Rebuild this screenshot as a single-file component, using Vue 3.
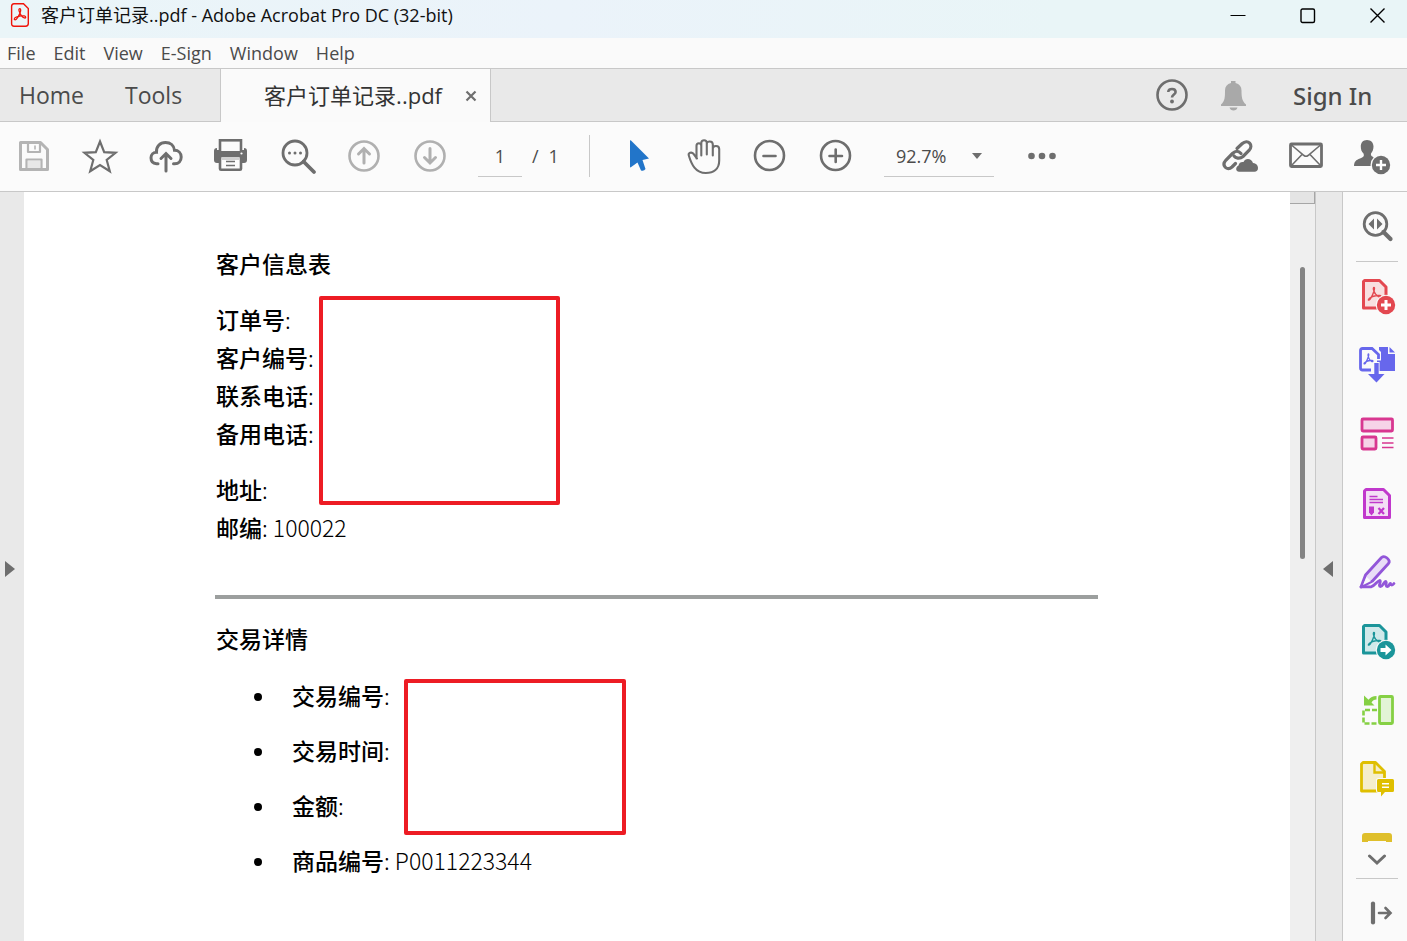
<script setup>
import { ref } from 'vue'

const menus = ['File', 'Edit', 'View', 'E-Sign', 'Window', 'Help']
const page = ref('1')
const zoom = ref('92.7%')
const customer = [
  [{ label: '订单号' }, { label: '客户编号' }, { label: '联系电话' }, { label: '备用电话' }],
  [{ label: '地址' }, { label: '邮编', value: '100022' }],
]
const trade = [
  { label: '交易编号' },
  { label: '交易时间' },
  { label: '金额' },
  { label: '商品编号', value: 'P0011223344' },
]
</script>

<template>
  <div class="window">
    <header class="titlebar">
      <svg class="app-icon" viewBox="0 0 20 26" fill="none" stroke="#f0140a">
        <path d="M4 1.8H13.500L18.300 6.500V21.500Q18.300 24.200 15.500 24.200H4Q1.600 24.200 1.600 21.500V4.500Q1.600 1.800 4 1.800Z" stroke-width="1.400" />
        <path d="M9.700 10.500C8.500 8 8.800 6.700 9.800 6.700C11 6.700 10.900 8.600 10 11C9 13.500 7.500 16.300 6.300 17.300C5 18.300 4 17.700 4.400 16.700C5 15.300 8 14.300 11 13.900C13.500 13.600 15.700 13.900 15.700 15.200C15.600 16.500 13.600 16.100 12.100 14.600C10.900 13.400 10.200 12 9.700 10.500Z" stroke-width="1.300" />
      </svg>
      <h1>客户订单记录..pdf - Adobe Acrobat Pro DC (32-bit)</h1>
      <div class="win-controls">
        <button aria-label="Minimize"><svg viewBox="0 0 16 16"><path d="M.5 7.500H15.500" stroke-width="1" /></svg></button>
        <button aria-label="Maximize"><svg viewBox="0 0 16 16"><rect x="1" y="1" width="13.500" height="13.500" rx="1.500" /></svg></button>
        <button aria-label="Close"><svg viewBox="0 0 16 16"><path d="M.5 .5L14.500 14.500M14.500 .5L.5 14.500" /></svg></button>
      </div>
    </header>

    <nav class="menubar">
      <button v-for="m in menus" :key="m">{{ m }}</button>
    </nav>

    <div class="tabs">
      <div class="main-tabs">
        <button>Home</button>
        <button>Tools</button>
      </div>
      <div class="doc-tab">
        <span>客户订单记录..pdf</span>
        <button aria-label="Close tab"><svg viewBox="0 0 12 12"><path d="M1.500 1.500L10.500 10.500M10.500 1.500L1.500 10.500" stroke="#6e6e6e" stroke-width="2.200" /></svg></button>
      </div>
      <div class="account">
        <button class="icon" aria-label="Help">
          <svg viewBox="0 0 40 40" fill="none" stroke="#6e6e6e">
            <circle cx="20" cy="20" r="14.500" stroke-width="2.600" />
            <path d="M16.300 17C16.300 14.800 18 14 20 14C22.200 14 23.600 15.200 23.600 17C23.600 19.600 20 19.600 20 22.600" stroke-width="2.600" />
            <circle cx="20" cy="26.500" r="1.900" fill="#6e6e6e" stroke="none" />
          </svg>
        </button>
        <button class="icon" aria-label="Notifications">
          <svg viewBox="0 0 40 40" fill="#a9a9a9">
            <path d="M18 6H22.500V8C26.500 9 28.500 11.500 28.500 15.500C28.500 22 29 26 33 29.500V31H8V29.500C12 26 12 22 12 15.500C12 11.500 14 9 18 8Z" />
            <path d="M16.500 32.500H24.500C24 34.500 22.500 35.500 20.500 35.500S17 34.500 16.500 32.500Z" />
          </svg>
        </button>
        <button class="sign-in">Sign In</button>
      </div>
    </div>

    <div class="toolbar">
      <div class="group">
        <button class="icon" aria-label="Save">
          <svg viewBox="0 0 40 40" fill="none" stroke="#b4b4b4" stroke-width="3" stroke-linejoin="round">
            <path d="M6.500 6.500H26.500L33.500 13.500V33.500H6.500Z" />
            <path d="M14 7V16H26V7M12.500 33V23.500H27.500V33" stroke-width="2.200" />
            <path d="M14 25H26V32H14Z" fill="#e8e8e8" stroke="none" />
            <path d="M21 9.500V13.500" stroke-width="1.600" />
          </svg>
        </button>
        <button class="icon" aria-label="Star">
          <svg viewBox="0 0 40 40" fill="none" stroke="#6e6e6e" stroke-width="2.200">
            <path d="M20 5.500L24.200 16.200L35.600 16.800L26.700 24L29.800 35.200L20 29L10.200 35.200L13.300 24L4.400 16.800L15.800 16.200Z" />
          </svg>
        </button>
        <button class="icon" aria-label="Upload to cloud">
          <svg viewBox="0 0 40 40" fill="none" stroke="#6e6e6e" stroke-width="3" stroke-linecap="round">
            <path d="M12 27.800H10.500C7 27.500 5 25 5 21.800C5 18.500 7.500 16.300 10.500 16.300C10 10.500 14 6.500 19.500 6.500C24.500 6.500 28 9.500 28.500 14.300C32.500 14.300 35.200 17.300 35.200 21C35.200 25 32.500 27.800 28.800 27.800H27.500" />
            <path d="M20 35V18M15 22.500L20 17.500L25 22.500" />
          </svg>
        </button>
        <button class="icon" aria-label="Print">
          <svg viewBox="0 0 40 40" fill="none" stroke="#6e6e6e" stroke-width="2.600">
            <path d="M2 15Q2 12 5 12V14H32V12Q35 12 35 15V24Q35 27 32 27H5Q2 27 2 24Z" fill="#6e6e6e" stroke="none" />
            <rect x="8" y="4.300" width="21" height="12" fill="#fbfbfb" />
            <path d="M6.700 15H30.300V21H6.700Z" fill="#6e6e6e" stroke="none" />
            <rect x="8" y="21" width="21" height="12.700" rx="1" fill="#fbfbfb" />
            <path d="M9.300 21H27.700V24H9.300Z" fill="#d0d0d0" stroke="none" />
            <path d="M14 25.500H23M14 29.500H23" stroke-width="1.400" />
            <circle cx="29.500" cy="17.500" r="1.100" fill="#fff" stroke="none" />
          </svg>
        </button>
        <button class="icon" aria-label="Find">
          <svg viewBox="0 0 40 40" fill="none" stroke="#6e6e6e">
            <circle cx="17" cy="17" r="12" stroke-width="2.800" />
            <path d="M25.500 25.500L36 36" stroke-width="3.800" stroke-linecap="round" />
            <g fill="#6e6e6e" stroke="none"><circle cx="11.500" cy="17" r="1.500" /><circle cx="17" cy="17" r="1.500" /><circle cx="22.500" cy="17" r="1.500" /></g>
          </svg>
        </button>
        <button class="icon" aria-label="Previous page">
          <svg viewBox="0 0 40 40" fill="none" stroke="#b0b0b0" stroke-width="3" stroke-linecap="round">
            <circle cx="20" cy="20" r="14.500" stroke-width="2.600" /><path d="M20 27V13M14.500 18L20 12.500L25.500 18" />
          </svg>
        </button>
        <button class="icon" aria-label="Next page">
          <svg viewBox="0 0 40 40" fill="none" stroke="#b0b0b0" stroke-width="3" stroke-linecap="round">
            <circle cx="20" cy="20" r="14.500" stroke-width="2.600" /><path d="M20 12.500V26.500M14.500 21.500L20 27L25.500 21.500" />
          </svg>
        </button>
      </div>
      <div class="pager">
        <input v-model="page" aria-label="Page number" />
        <span>/</span><span>1</span>
      </div>
      <div class="group divided">
        <button class="icon" aria-label="Select">
          <svg viewBox="0 0 40 40" fill="#2275c9"><path d="M12.500 4L31 22.500L24.500 24L27.500 33Q26 35.500 23 34.500L19.500 26.500L12.500 31.500Q12 31.500 12 30.500V5Z" /></svg>
        </button>
        <button class="icon" aria-label="Hand">
          <svg viewBox="0 0 40 40" fill="none" stroke="#6e6e6e" stroke-width="2.100" stroke-linecap="round" stroke-linejoin="round">
            <path d="M12.500 22.500V9.800C12.500 6.300 17.300 6.300 17.300 9.800V19.500M17.300 18V6.800C17.300 3.300 22.800 3.300 22.800 6.800V18.500M22.800 8C22.800 4.500 28.800 4.500 28.800 8.500V19.500M28.800 12.500C29 9 35.200 9 35.200 13V24.500C35.200 33 29.500 37 21.800 37C11.500 37 7.500 28.500 4.800 19.500C4 16.800 7.500 15.500 9.500 17.800L13 22.500" />
          </svg>
        </button>
        <button class="icon" aria-label="Zoom out">
          <svg viewBox="0 0 40 40" fill="none" stroke="#6e6e6e" stroke-linecap="round"><circle cx="19.500" cy="19.500" r="14.500" stroke-width="2.600" /><path d="M13.500 20H25.500" stroke-width="2.600" /></svg>
        </button>
        <button class="icon" aria-label="Zoom in">
          <svg viewBox="0 0 40 40" fill="none" stroke="#6e6e6e" stroke-linecap="round"><circle cx="19.500" cy="19.500" r="14.500" stroke-width="2.600" /><path d="M13.500 20H26M19.700 13.500V26" stroke-width="2.600" /></svg>
        </button>
      </div>
      <div class="zoom">
        <select v-model="zoom" aria-label="Zoom level"><option>92.7%</option></select>
        <svg viewBox="0 0 12 8"><path d="M1 1H11L6 7Z" fill="#6e6e6e" /></svg>
      </div>
      <button class="icon" aria-label="More tools">
        <svg viewBox="0 0 40 40" fill="#6e6e6e"><circle cx="9.500" cy="20" r="3.300" /><circle cx="20" cy="20" r="3.300" /><circle cx="30.500" cy="20" r="3.300" /></svg>
      </button>
      <div class="group share">
        <button class="icon" aria-label="Share link">
          <svg viewBox="0 0 40 40" fill="none" stroke="#6e6e6e" stroke-width="3.200" stroke-linecap="round">
            <path d="M17 12.500L22 7.800C28 2.500 34 9 29 14.500L23 20.500C19.500 23.500 15.500 22 14 20" />
            <path d="M21 17.500C18.500 14.500 15.500 14.500 12.500 17.500L6 24C1 29.500 7 35.500 12 31L15.500 27.500" />
            <path d="M19 35.800C15.800 35.800 15 31.500 18.500 29.500C19 26.500 21.500 25.500 23.500 26C25 22 31.500 22 33 27C37 27.500 38 30 38 32C38 34.500 36.500 35.800 34.500 35.800Z" fill="#6e6e6e" stroke="#fbfbfb" stroke-width="1.200" paint-order="stroke" />
          </svg>
        </button>
        <button class="icon" aria-label="Email">
          <svg viewBox="0 0 40 40" fill="none" stroke="#6e6e6e">
            <rect x="4.500" y="8" width="31" height="22.500" rx="1" stroke-width="2.800" />
            <path d="M5.500 9L18 19.500Q20 21 22 19.500L34.500 9M5.500 29.500L16 18.500M34.500 29.500L24 18.500" stroke-width="1.600" />
          </svg>
        </button>
        <button class="icon" aria-label="Add people">
          <svg viewBox="0 0 40 40" fill="#6e6e6e">
            <path d="M15 4C19 4 21.500 6.800 21.500 10.500C21.500 13.500 20.500 15.500 19 17.500C18.500 20 20 20.500 25 23V30H2C2 25.500 4 24 8 22.500C11.500 21 12.500 20.500 11.500 17.500C9.500 15.500 8.800 13.500 8.800 10.500C8.800 6.800 11 4 15 4Z" />
            <circle cx="29" cy="29" r="10.500" fill="#fbfbfb" /><circle cx="29" cy="29" r="9.200" />
            <path d="M24 29H34M29 24V34" stroke="#fff" stroke-width="2.400" />
          </svg>
        </button>
      </div>
    </div>

    <div class="workspace">
      <button class="edge left" aria-label="Open navigation pane"><svg viewBox="0 0 10 16"><path d="M0 0L10 8L0 16Z" fill="#6e6e6e" /></svg></button>

      <main class="page">
        <article>
          <section>
            <h2>客户信息表</h2>
            <div v-for="(block, i) in customer" :key="i" class="block">
              <p v-for="f in block" :key="f.label"><b>{{ f.label }}</b>: {{ f.value }}</p>
            </div>
            <div class="mask customer-mask"></div>
          </section>
          <hr />
          <section>
            <h2>交易详情</h2>
            <ul>
              <li v-for="f in trade" :key="f.label"><b>{{ f.label }}</b>: {{ f.value }}</li>
            </ul>
            <div class="mask trade-mask"></div>
          </section>
        </article>
      </main>

      <div class="scrollbar"><div class="split"></div><div class="thumb"></div></div>
      <button class="edge right" aria-label="Close tools pane"><svg viewBox="0 0 10 16"><path d="M10 0L0 8L10 16Z" fill="#6e6e6e" /></svg></button>

      <aside class="tools">
        <div class="tools-head">
          <button class="icon" aria-label="Search tools">
            <svg viewBox="0 0 40 40" fill="none" stroke="#6e6e6e">
              <circle cx="18.500" cy="18" r="11.300" stroke-width="2.800" /><path d="M26.500 26L33.500 33" stroke-width="4.200" stroke-linecap="round" />
              <path d="M17 12.500V23.500L11.500 18ZM20 12.500V23.500L25.500 18Z" fill="#6e6e6e" stroke="none" />
            </svg>
          </button>
        </div>
        <div class="tool-list">
          <button class="icon" aria-label="Create PDF">
            <svg viewBox="0 0 40 40" fill="none" stroke="#e34850">
              <path d="M7.500 4.500H22.500L29 11V32H6.500V5.500Z" fill="#f8dfe0" stroke-width="3" stroke-linejoin="round" />
              <path d="M17 11.500C15.500 11.500 17 16 18.500 18C20 20.500 24 22.500 24 20.500C24 18.500 17 19.500 13.500 21.500C10 24 11.500 25.500 13.500 22.500C16 19 18.500 11.500 17 11.500Z" stroke-width="1.400" />
              <circle cx="29" cy="29" r="10.300" fill="#fafafa" stroke="none" /><circle cx="29" cy="29" r="9.200" fill="#e34850" stroke="none" />
              <path d="M24 29H34M29 24V34" stroke="#fff" stroke-width="3" />
            </svg>
          </button>
          <button class="icon" aria-label="Export PDF">
            <svg viewBox="0 0 40 40" fill="none" stroke="#6767ec">
              <path d="M14 25H5.500Q3.500 25 3.500 23V5.500Q3.500 3.500 5.500 3.500H15L21.500 9.500V14" stroke-width="2.800" />
              <path d="M11.500 9C10.500 9 11.300 12.500 12.300 14C13.500 16 16 17.500 16 16C16 14.800 11 15.500 8.500 17C6 18.500 7 20 8.500 18C10.300 15.500 12.500 9 11.500 9Z" stroke-width="1.300" />
              <path d="M22 2H31V9H38V26H20V15.500H24V7L22 5Z" fill="#6767ec" stroke="none" /><path d="M32.500 2L38 7.500H32.500Z" fill="#6767ec" stroke="none" />
              <path d="M17.300 18H21.700V29H27.500L19.500 37.500L11 29H17.300Z" fill="#6767ec" stroke="#fafafa" stroke-width="1.800" paint-order="stroke" />
            </svg>
          </button>
          <button class="icon" aria-label="Organize pages">
            <svg viewBox="0 0 40 40" fill="#f6d3e8" stroke="#d83790" stroke-width="2.800">
              <rect x="5" y="5" width="30.500" height="12" rx="1" /><rect x="5" y="23" width="14" height="12" rx="1" />
              <path d="M25 24H36.500M25 29H36.500M25 33.500H36.500" stroke-width="1.500" />
            </svg>
          </button>
          <button class="icon" aria-label="Prepare form">
            <svg viewBox="0 0 40 40" fill="none" stroke="#c038cc">
              <path d="M9 6.500H26.500L32.500 12.500V34.500H7.500V8Z" fill="#f3dff5" stroke-width="3" stroke-linejoin="round" />
              <path d="M12.500 13.500H20.500M12.500 16.500H26M12.500 19.500H26" stroke-width="1.500" />
              <path d="M21.500 25L27 31M27 25L21.500 31" stroke-width="2.200" />
              <path d="M12 23.500H17V29.500L14.500 32.500L12 29.500Z" fill="#c038cc" stroke="none" />
            </svg>
          </button>
          <button class="icon" aria-label="Fill and sign">
            <svg viewBox="0 0 40 40" fill="none" stroke="#9256d9" stroke-width="2.800" stroke-linejoin="round" stroke-linecap="round">
              <path d="M4 35L8.500 23L24.500 5.500Q27 3.500 30 6Q33.500 9 31.500 11.500L15.500 29Z" fill="#e9ddf7" />
              <path d="M6 33L9.500 25L14 29Z" fill="#fafafa" stroke="none" />
              <path d="M4 34.800H14C18 34 20 29 22.500 28.500C25 28.500 20.500 34.500 23.500 34.500C26 34.500 27 29.500 28.500 29.500C30.500 29.500 27.500 34.500 30.500 34.500C32.500 34.500 32 31.500 33.500 31.500C34 33.500 35.500 33.500 37 31.500" />
            </svg>
          </button>
          <button class="icon" aria-label="Send PDF">
            <svg viewBox="0 0 40 40" fill="none" stroke="#1b959a">
              <path d="M7.500 4.500H22.500L29 11V32H6.500V5.500Z" fill="#d0e9ea" stroke-width="3" stroke-linejoin="round" />
              <path d="M17 11.500C15.500 11.500 17 16 18.500 18C20 20.500 24 22.500 24 20.500C24 18.500 17 19.500 13.500 21.500C10 24 11.500 25.500 13.500 22.500C16 19 18.500 11.500 17 11.500Z" stroke-width="1.400" />
              <circle cx="29" cy="29" r="10.300" fill="#fafafa" stroke="none" /><circle cx="29" cy="29" r="9.200" fill="#1b959a" stroke="none" />
              <path d="M23.500 27H28.500V23.500L34.500 29L28.500 34.500V31H23.500Z" fill="#fff" stroke="none" />
            </svg>
          </button>
          <button class="icon" aria-label="Compare files">
            <svg viewBox="0 0 40 40" fill="none" stroke="#85d044">
              <rect x="22.500" y="6.500" width="13" height="27" rx="1" fill="#e3f4d6" stroke-width="2.800" />
              <path d="M20 20H6.500V33.500H20" stroke-width="2.600" stroke-dasharray="5 2" />
              <path d="M7 5.500V15.500H17.500L14.500 12.500Q16 9.500 19.500 9.500V6Q14 6 11.500 9.800Z" fill="#85d044" stroke="none" />
            </svg>
          </button>
          <button class="icon" aria-label="Comment">
            <svg viewBox="0 0 40 40" fill="none" stroke="#dfbf00">
              <path d="M6 3.500H18.500L27.500 12.500V32H4.500V5Z" fill="#f5eecb" stroke-width="2.800" stroke-linejoin="round" />
              <path d="M17.500 4V13.500H27.500" stroke-width="2.400" />
              <path d="M21.500 20H35.500Q37 20 37 21.500V31.500Q37 33 35.500 33H28L24 37.500V33H21.500Q20 33 20 31.500V21.500Q20 20 21.500 20Z" fill="#dfbf00" stroke="#fafafa" stroke-width="2" paint-order="stroke" />
              <path d="M25 24.800H32M25 28.200H32" stroke="#fff" stroke-width="1.400" />
            </svg>
          </button>
          <button class="icon" aria-label="Scan and OCR">
            <svg viewBox="0 0 40 40"><path d="M5 14V8Q5 5 8 5H32Q35 5 35 8V14H29V13H11V14Z" fill="#dfbf2b" /></svg>
          </button>
        </div>
        <div class="tools-foot">
          <button class="more" aria-label="Show more tools"><svg viewBox="0 0 20 12"><path d="M2.500 2L10 9L17.500 2" fill="none" stroke="#6e6e6e" stroke-width="3" stroke-linecap="round" /></svg></button>
          <button class="icon" aria-label="Collapse tools">
            <svg viewBox="0 0 40 40" fill="none" stroke="#6e6e6e" stroke-linecap="round"><path d="M16 10.500V29.500" stroke-width="4.200" /><path d="M22 20H33M28.500 15L33.500 20L28.500 25" stroke-width="2.600" /></svg>
          </button>
        </div>
      </aside>
    </div>
  </div>
</template>

<style>
html, body { margin: 0; background: #fff; }
</style>

<style scoped>
.window { height: 100vh; display: flex; flex-direction: column; overflow: hidden; font-family: "Open Sans", "Noto Sans CJK SC", sans-serif; color: #4b4b4b; }
* { box-sizing: border-box; }
button { border: 0; padding: 0; background: none; font: inherit; color: inherit; white-space: nowrap; }
svg { display: block; }
.icon { width: 40px; height: 40px; flex: none; }
.icon svg { width: 40px; height: 40px; }

.titlebar { height: 38px; flex: none; display: flex; align-items: flex-start; padding: 2px 21px 0 10px; background: linear-gradient(90deg, #eaf5f8, #ebf3fa 40%, #e9f5f7 75%); }
.app-icon { width: 20px; height: 26px; }
h1 { margin: 0 0 0 11px; font-size: 18px; line-height: 26px; font-weight: 400; color: #111; white-space: nowrap; }
.win-controls { margin-left: auto; display: flex; gap: 54px; padding-top: 6px; }
.win-controls svg { width: 16px; height: 16px; fill: none; stroke: #000; stroke-width: 1.400; }

.menubar { height: 31px; flex: none; display: flex; gap: 18px; padding-left: 7px; background: #fafafa; border-bottom: 1px solid #c8c8c8; font-size: 18px; }

.tabs { height: 53px; flex: none; display: flex; background: #e9e9e9; font-size: 23px; }
.main-tabs { width: 220px; display: flex; gap: 41px; padding-left: 19px; border-bottom: 1px solid #c8c8c8; }
.doc-tab { width: 271px; display: flex; align-items: center; justify-content: flex-end; gap: 23px; padding-right: 13px; background: #fafafa; border: solid #c8c8c8; border-width: 0 1px; font-size: 22px; color: #333; }
.doc-tab span { padding-bottom: 4px; }
.doc-tab svg { width: 12px; height: 12px; }
.account { flex: 1; display: flex; align-items: center; justify-content: flex-end; padding-right: 33px; border-bottom: 1px solid #c8c8c8; }
.account .icon + .icon { margin-left: 21px; }
.sign-in { min-width: 81px; margin-left: 40px; text-align: left; font-size: 24px; font-family: "Noto Sans", "Open Sans", sans-serif; font-weight: 500; }

.toolbar { height: 70px; flex: none; display: flex; align-items: center; padding: 0 15px 1px 14px; background: #fbfbfb; border-bottom: 1px solid #c8c8c8; font-size: 18px; }
.group { display: flex; gap: 26px; }
.pager { display: flex; align-items: center; gap: 10px; margin-left: 28px; }
.pager input { width: 44px; height: 42px; padding: 0; text-align: center; border: 0; border-bottom: 1px solid #c8c8c8; background: none; font: inherit; color: inherit; }
.divided { height: 42px; align-items: center; margin-left: 30px; padding-left: 28px; border-left: 1px solid #c8c8c8; }
.zoom { position: relative; width: 110px; margin: 0 28px; }
.zoom select { display: block; width: 100%; height: 42px; padding: 0 12px; appearance: none; border: 0; border-bottom: 1px solid #c8c8c8; border-radius: 0; background: none; font: inherit; color: inherit; }
.zoom svg { position: absolute; right: 11px; top: 17px; width: 12px; height: 8px; pointer-events: none; }
.share { margin-left: auto; }

.workspace { flex: 1; min-height: 0; display: flex; }
.edge { flex: none; display: flex; align-items: center; padding-top: 5px; background: #e9e9e9; }
.edge svg { width: 10px; height: 16px; }
.left { width: 24px; padding-left: 5px; }
.right { width: 28px; padding-left: 7px; border: solid #c8c8c8; border-width: 0 1px; }

.page { flex: 1; min-width: 0; overflow: hidden; background: #fff; color: #000; font-family: "Noto Sans CJK SC", sans-serif; font-size: 23px; line-height: 38px; }
article { max-width: 1074px; padding: 52px 0 0 191px; }
section { position: relative; padding-left: 1px; }
h2 { margin: 0; font-size: 23px; font-weight: 500; }
b { font-weight: 500; }
p, ul { margin: 0; }
.block, li { font-weight: 300; }
.block { padding-top: 18px; }
hr { height: 4px; margin: 49px 0 20px; border: 0; background: #9c9f9e; }
ul { list-style: none; padding: 2px 0 0 76px; }
li { position: relative; margin-top: 17px; }
li::before { content: ""; position: absolute; left: -38px; top: 17px; width: 8px; height: 8px; border-radius: 50%; background: #000; }
.mask { position: absolute; border: 4px solid #ed1c24; border-radius: 2px; background: #fff; }
.customer-mask { left: 104px; top: 52px; width: 241px; height: 209px; }
.trade-mask { left: 189px; top: 60px; width: 222px; height: 156px; }

.scrollbar { flex: none; width: 25px; background: #efefef; }
.split { height: 12px; background: #e4e4e4; border: solid #a6a6a6; border-width: 0 1px 1px 0; }
.thumb { width: 5px; height: 292px; margin: 63px auto 0; border-radius: 3px; background: #848484; }

.tools { flex: none; width: 64px; display: flex; flex-direction: column; padding: 0 9px 0 13px; background: #fafafa; }
.tools-head { height: 70px; flex: none; padding-top: 14px; border-bottom: 1px solid #c8c8c8; }
.tool-list { flex: 1; min-height: 0; overflow: hidden; display: flex; flex-direction: column; gap: 29px; padding: 14px 0 0 1px; }
.tools-foot { height: 99px; flex: none; }
.more { width: 100%; height: 37px; padding-left: 11px; border-bottom: 1px solid #c8c8c8; }
.more svg { width: 20px; height: 12px; }
.tools-foot .icon { margin-top: 10px; }
.tools-head .icon, .tools-foot .icon { margin-left: 1px; }
</style>
